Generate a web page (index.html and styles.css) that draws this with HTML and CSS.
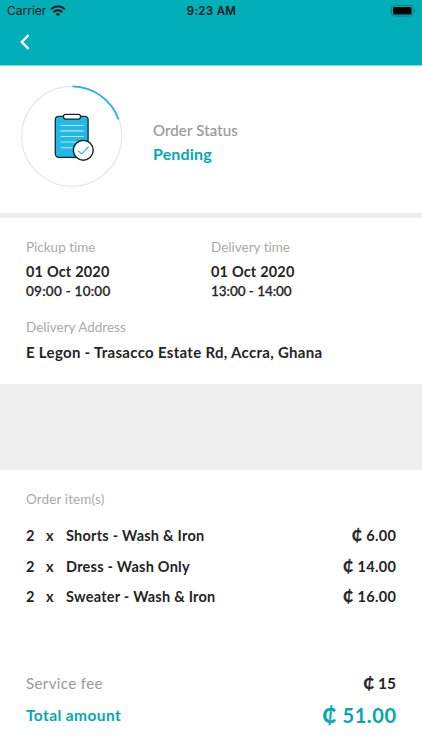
FILE: index.html
```html
<!DOCTYPE html>
<html lang="en">
<head>
<meta charset="utf-8">
<title>Order details</title>
<link rel="stylesheet" href="styles.css">
</head>
<body>
<header class="header">
  <div class="statusbar">
    <div class="carrier"><span>Carrier</span>
      <svg width="16" height="12" viewBox="0 0 16 12" fill="none" stroke="#08191b" stroke-width="2"><path d="M1 4.3Q8-1.7 15 4.3M3.5 7.1q4.500-3.700 9 0"/><path d="M5.600 8.900q2.400-1.900 4.800 0L8 11.300z" fill="#08191b" stroke="none"/></svg>
    </div>
    <div class="clock">9:23 AM</div>
    <svg class="battery" width="25" height="12" viewBox="0 0 25 12"><rect x=".5" y=".5" width="21.500" height="10.500" rx="3" fill="none" stroke="#087f84"/><rect x="2" y="2" width="18.500" height="7.500" rx="1.600" fill="#000"/><path d="M23.300 4v4q1.200-.7 1.200-2t-1.200-2z" fill="#087f84"/></svg>
  </div>
  <svg class="back" width="10" height="16" viewBox="0 0 10 16" fill="none" stroke="#fff" stroke-width="2.400"><path d="M8.600 1 1.800 8l6.800 7"/></svg>
</header>
<section class="status">
  <svg width="104" height="104" viewBox="0 0 104 104" fill="none">
    <circle cx="51.700" cy="52.300" r="50" stroke="#e7e7e8" stroke-width="1.300"/>
    <path d="M52.500 2.300A50 50 0 0 1 98.600 35.500" stroke="#24b5e3" stroke-width="1.800"/>
    <rect x="35.300" y="32.300" width="32.800" height="41" rx="3.500" fill="#22b8e8" stroke="#122b34" stroke-width="1.300"/>
    <rect x="43.400" y="30.400" width="17.200" height="4.700" rx="2.300" fill="#fff" stroke="#1d282c" stroke-width="1.200"/>
    <path d="M40.500 41.500h23M40.500 46.900h23M40.500 52.500h23M40.500 58h16M40.500 63.800h12" stroke="#b5e9f9" stroke-width="1.100"/>
    <circle cx="63.300" cy="66.300" r="9.900" fill="#fff" stroke="#1b2224" stroke-width="1.400"/>
    <path d="m58 66.800 3.700 3.200 7-7.500" stroke="#40b9dc" stroke-width="1.200"/>
  </svg>
  <div class="status-text"><div class="status-label"><span>Order Status</span></div><div class="pending"><span>Pending</span></div></div>
</section>
<section class="delivery">
  <div class="times">
    <div><div class="label">Pickup time</div><div class="date">01 Oct 2020</div><div class="hours">09:00 - 10:00</div></div>
    <div><div class="label">Delivery time</div><div class="date">01 Oct 2020</div><div class="hours later">13:00 - 14:00</div></div>
  </div>
  <div class="label address-label">Delivery Address</div>
  <div class="address">E Legon - Trasacco Estate Rd, Accra, Ghana</div>
</section>
<section class="items">
  <div class="label items-label">Order item(s)</div>
  <ul>
    <li><span>2</span><span>x</span><span class="name">Shorts - Wash &amp; Iron</span><span class="price"><span class="cedi">₵</span> 6.00</span></li>
    <li><span>2</span><span>x</span><span class="name">Dress - Wash Only</span><span class="price"><span class="cedi">₵</span> 14.00</span></li>
    <li><span>2</span><span>x</span><span class="name">Sweater - Wash &amp; Iron</span><span class="price"><span class="cedi">₵</span> 16.00</span></li>
  </ul>
</section>
<footer class="totals">
  <div class="row fee"><span>Service fee</span><span class="fee-value"><span class="cedi">₵</span> 15</span></div>
  <div class="row total"><span>Total amount</span><span class="total-value"><span class="cedi">₵</span> 51.00</span></div>
</footer>
</body>
</html>
```
FILE: styles.css
```css
* { box-sizing: border-box; }
body { margin: 0; width: 422px; height: 750px; overflow: hidden; background: #fff; color: #252525; font: 15px/20px Lato, "Liberation Sans", sans-serif; font-variant-ligatures: none; }
svg { display: block; flex: none; }
div, span { white-space: nowrap; }
.header { height: 66px; background: #02afb9; border-bottom: 1px solid #8adce0; }
.statusbar { height: 22px; padding: 0 6px 0 7px; display: grid; grid-template-columns: 1fr auto 1fr; align-items: center; font: 12px/22px Inter, sans-serif; color: #08191b; }
.carrier { display: flex; align-items: center; gap: 4px; }
.clock { font-weight: 600; letter-spacing: .3px; font-size: 11.500px; }
.battery { justify-self: end; }
.back { margin: 12px 0 0 20px; }
.status { height: 152px; padding: 18px 0 0 20px; display: flex; gap: 29px; border-bottom: 5px solid #eee; }
.status-text { padding-top: 36px; }
.status-label { height: 24px; color: #999; letter-spacing: .15px; -webkit-text-stroke: .2px currentColor; }
.pending { color: #02a9b3; font-weight: 700; font-size: 16px; letter-spacing: .15px; }
.delivery { height: 166px; padding: 19px 26px 0; }
.times { display: grid; grid-template-columns: 185px 185px; }
.label { font-size: 13.500px; color: #aaa; }
.date { font-weight: 700; font-size: 14.500px; line-height: 20px; margin-top: 5px; letter-spacing: .18px; }
.hours { font-size: 13.500px; line-height: 20px; margin-top: -1px; font-weight: 500; letter-spacing: .25px; -webkit-text-stroke: .3px currentColor; }
.later { letter-spacing: -.05px; }
.address-label { margin-top: 16px; }
.address { margin-top: 5px; font-weight: 700; font-size: 15px; letter-spacing: .3px; }
.items { border-top: 86px solid #eee; padding: 19px 26px 0; height: 276px; }
.items-label { letter-spacing: .12px; }
ul { list-style: none; margin: 11px 0 0; padding: 0; }
li { height: 30.500px; line-height: 31px; display: grid; grid-template-columns: 20px 20px 1fr auto; font-weight: 700; font-size: 14.500px; letter-spacing: .24px; }
.price { letter-spacing: .35px; margin-right: -.35px; }
.cedi { -webkit-text-stroke: .45px currentColor; }
.totals { padding: 11px 26px 0; }
.row { display: flex; justify-content: space-between; line-height: 24px; }
.fee { color: #999; letter-spacing: .4px; }
.fee-value { color: #252525; font-weight: 700; font-size: 15.500px; letter-spacing: 0; }
.total { margin-top: 8px; color: #02a9b3; font-weight: 700; font-size: 15.500px; letter-spacing: .4px; }
.total-value { font-size: 20px; letter-spacing: .6px; margin-right: -.6px; }
```
